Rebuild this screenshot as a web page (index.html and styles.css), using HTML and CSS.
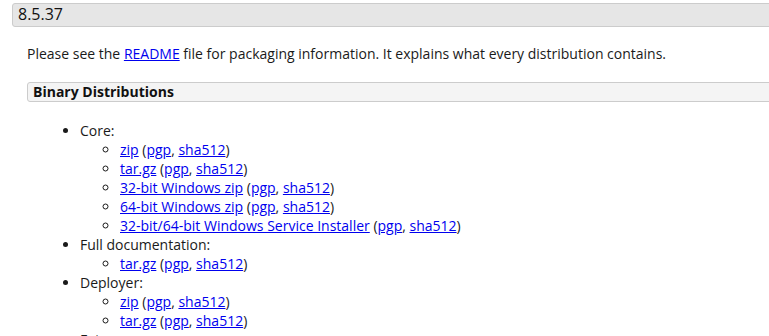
FILE: index.html
```html
<!DOCTYPE html>
<html>
  <head>
    <meta charset="UTF-8">
    <title>Tomcat 8 Software Downloads</title>
    <link rel="stylesheet" href="styles.css">
  </head>
  <body>
    <div class="panel">
      <h3 class="release">8.5.37</h3>
      <div class="section">
        <p>Please see the <a href="#">README</a> file for packaging information. It explains what every distribution contains.</p>
        <h4 class="subhead">Binary Distributions</h4>
        <ul class="dist">
          <li>Core:
            <ul>
              <li><a href="#">zip</a> (<a href="#">pgp</a>, <a href="#">sha512</a>)</li>
              <li><a href="#">tar.gz</a> (<a href="#">pgp</a>, <a href="#">sha512</a>)</li>
              <li><a href="#">32-bit Windows zip</a> (<a href="#">pgp</a>, <a href="#">sha512</a>)</li>
              <li><a href="#">64-bit Windows zip</a> (<a href="#">pgp</a>, <a href="#">sha512</a>)</li>
              <li><a href="#">32-bit/64-bit Windows Service Installer</a> (<a href="#">pgp</a>, <a href="#">sha512</a>)</li>
            </ul>
          </li>
          <li>Full documentation:
            <ul>
              <li><a href="#">tar.gz</a> (<a href="#">pgp</a>, <a href="#">sha512</a>)</li>
            </ul>
          </li>
          <li>Deployer:
            <ul>
              <li><a href="#">zip</a> (<a href="#">pgp</a>, <a href="#">sha512</a>)</li>
              <li><a href="#">tar.gz</a> (<a href="#">pgp</a>, <a href="#">sha512</a>)</li>
            </ul>
          </li>
          <li>Extras:
            <ul>
              <li><a href="#">JMX Remote jar</a> (<a href="#">pgp</a>, <a href="#">sha512</a>)</li>
              <li><a href="#">Web services jar</a> (<a href="#">pgp</a>, <a href="#">sha512</a>)</li>
            </ul>
          </li>
        </ul>
      </div>
    </div>
  </body>
</html>
```

FILE: styles.css
```css
html, body {
	overflow: hidden;
}

body {
	background-color: #fff;
	font-family: "Open Sans", "Liberation Sans", sans-serif;
	font-size: 14px;
	line-height: 19px;
	color: #1a1a1a;
	margin: 0;
	padding: 0;
}

a {
	color: #0000ee;
}

.panel {
	padding: 3px 0 0 12px;
	margin-right: -30px;
}

.release {
	margin: 0;
	padding: 0 5px 1px;
	background-color: #e6e6e6;
	border: 1px solid #ccc;
	border-radius: 3px;
	font-size: 16px;
	font-weight: normal;
	line-height: 21px;
	color: #111;
}

.section {
	padding-left: 15px;
}

.section p {
	margin: 17px 0 19px;
}

.subhead {
	margin: 0 0 6px;
	padding: 0 5px;
	background-color: #f4f4f4;
	border: 1px solid #ccc;
	border-radius: 3px;
	font-size: 14px;
	font-weight: bold;
	line-height: 18px;
	color: #111;
}

.dist {
	margin: 19px 0 0;
	padding-left: 53px;
}

.dist ul {
	margin: 0;
	padding-left: 40px;
}
```
